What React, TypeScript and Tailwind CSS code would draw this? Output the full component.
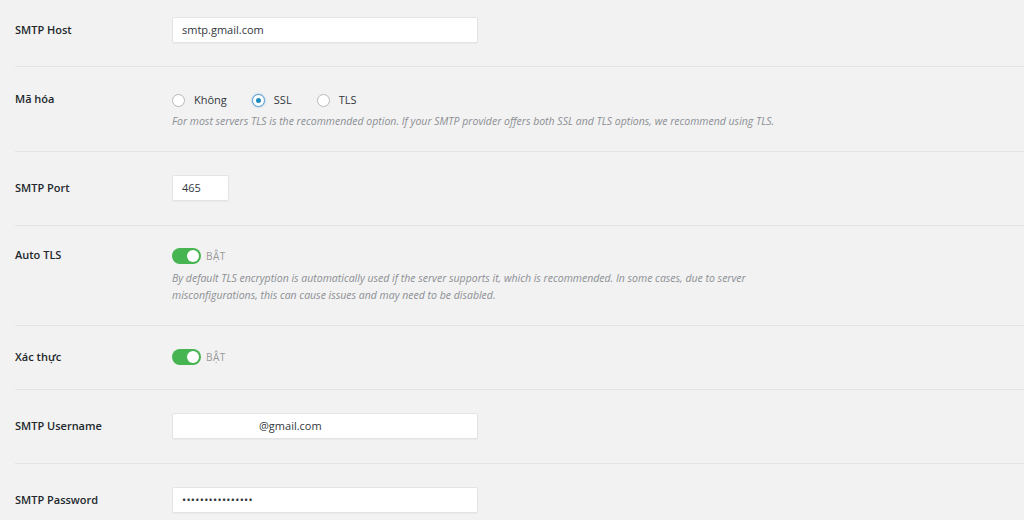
import React from 'react';

const font = { fontFamily: '"Open Sans", "Noto Sans", "Liberation Sans", sans-serif' };

function Label({ children }: { children: React.ReactNode }) {
  return (
    <div className="w-[157px] shrink-0 text-[11px] font-semibold text-[#23282d] leading-[26px]">
      {children}
    </div>
  );
}

function TextInput({ value, width = 'w-[306px]', indent = '' }: { value: string; width?: string; indent?: string }) {
  return (
    <div
      className={`${width} h-[26px] bg-white border border-[#e4e4e4] rounded-[2px] shadow-[0_1px_1px_rgba(0,0,0,0.04)] flex items-center px-[9px] text-[11px] text-[#32373c]`}
    >
      <span className={indent}>{value}</span>
    </div>
  );
}

function Radio({ label, checked }: { label: string; checked?: boolean }) {
  return (
    <div className="flex items-center gap-[9px]">
      <span
        className={`w-[13px] h-[13px] rounded-full border bg-white flex items-center justify-center ${
          checked ? 'border-[#5b9dd9] shadow-[0_0_2px_rgba(30,140,190,0.6)]' : 'border-[#b4b9be]'
        }`}
      >
        {checked && <span className="w-[5px] h-[5px] rounded-full bg-[#1e8cbe]" />}
      </span>
      <span className="text-[11px] text-[#32373c]">{label}</span>
    </div>
  );
}

function Toggle() {
  return (
    <div className="flex items-center gap-[5px] h-[26px]">
      <span className="w-[29px] h-[16px] rounded-full bg-[#46b450] flex items-center justify-end pr-[2px]">
        <span className="w-[12px] h-[12px] rounded-full bg-white" />
      </span>
      <span className="text-[10px] text-[#999] tracking-[0.5px]">BẬT</span>
    </div>
  );
}

function Desc({ children }: { children: React.ReactNode }) {
  return <p className="text-[10.5px] italic text-[#8c8f94] leading-[17px]">{children}</p>;
}

export default function App() {
  return (
    <div className="w-[1024px] h-[520px] overflow-hidden bg-[#f2f2f2] pl-[15px]" style={font}>
      {/* SMTP Host */}
      <div className="flex items-start pt-[17px] pb-[23px] border-b border-[#e3e3e3]">
        <Label>SMTP Host</Label>
        <TextInput value="smtp.gmail.com" />
      </div>

      {/* Encryption */}
      <div className="flex items-start pt-[19px] pb-[21px] border-b border-[#e3e3e3]">
        <Label>Mã hóa</Label>
        <div className="flex flex-col">
          <div className="flex items-center gap-[25px] h-[26px] mt-[1px]">
            <Radio label="Không" />
            <Radio label="SSL" checked />
            <Radio label="TLS" />
          </div>
          <Desc>
            For most servers TLS is the recommended option. If your SMTP provider offers both SSL and TLS options, we
            recommend using TLS.
          </Desc>
        </div>
      </div>

      {/* Port */}
      <div className="flex items-start pt-[23px] pb-[24px] border-b border-[#e3e3e3]">
        <Label>SMTP Port</Label>
        <TextInput value="465" width="w-[57px]" />
      </div>

      {/* Auto TLS */}
      <div className="flex items-start pt-[16px] pb-[21px] border-b border-[#e3e3e3]">
        <Label>Auto TLS</Label>
        <div className="flex flex-col">
          <div className="mt-[1px]">
            <Toggle />
          </div>
          <div className="w-[610px] mt-[1px]">
            <Desc>
              By default TLS encryption is automatically used if the server supports it, which is recommended. In some
              cases, due to server misconfigurations, this can cause issues and may need to be disabled.
            </Desc>
          </div>
        </div>
      </div>

      {/* Auth */}
      <div className="flex items-start pt-[18px] pb-[19px] border-b border-[#e3e3e3]">
        <Label>Xác thực</Label>
        <Toggle />
      </div>

      {/* Username */}
      <div className="flex items-start pt-[23px] pb-[24px] border-b border-[#e3e3e3]">
        <Label>SMTP Username</Label>
        <TextInput value="@gmail.com" indent="pl-[77px]" />
      </div>

      {/* Password */}
      <div className="flex items-start pt-[23px] pb-[23px]">
        <Label>SMTP Password</Label>
        <TextInput value="••••••••••••••••" indent="text-[11px] tracking-[0.3px]" />
      </div>
    </div>
  );
}
